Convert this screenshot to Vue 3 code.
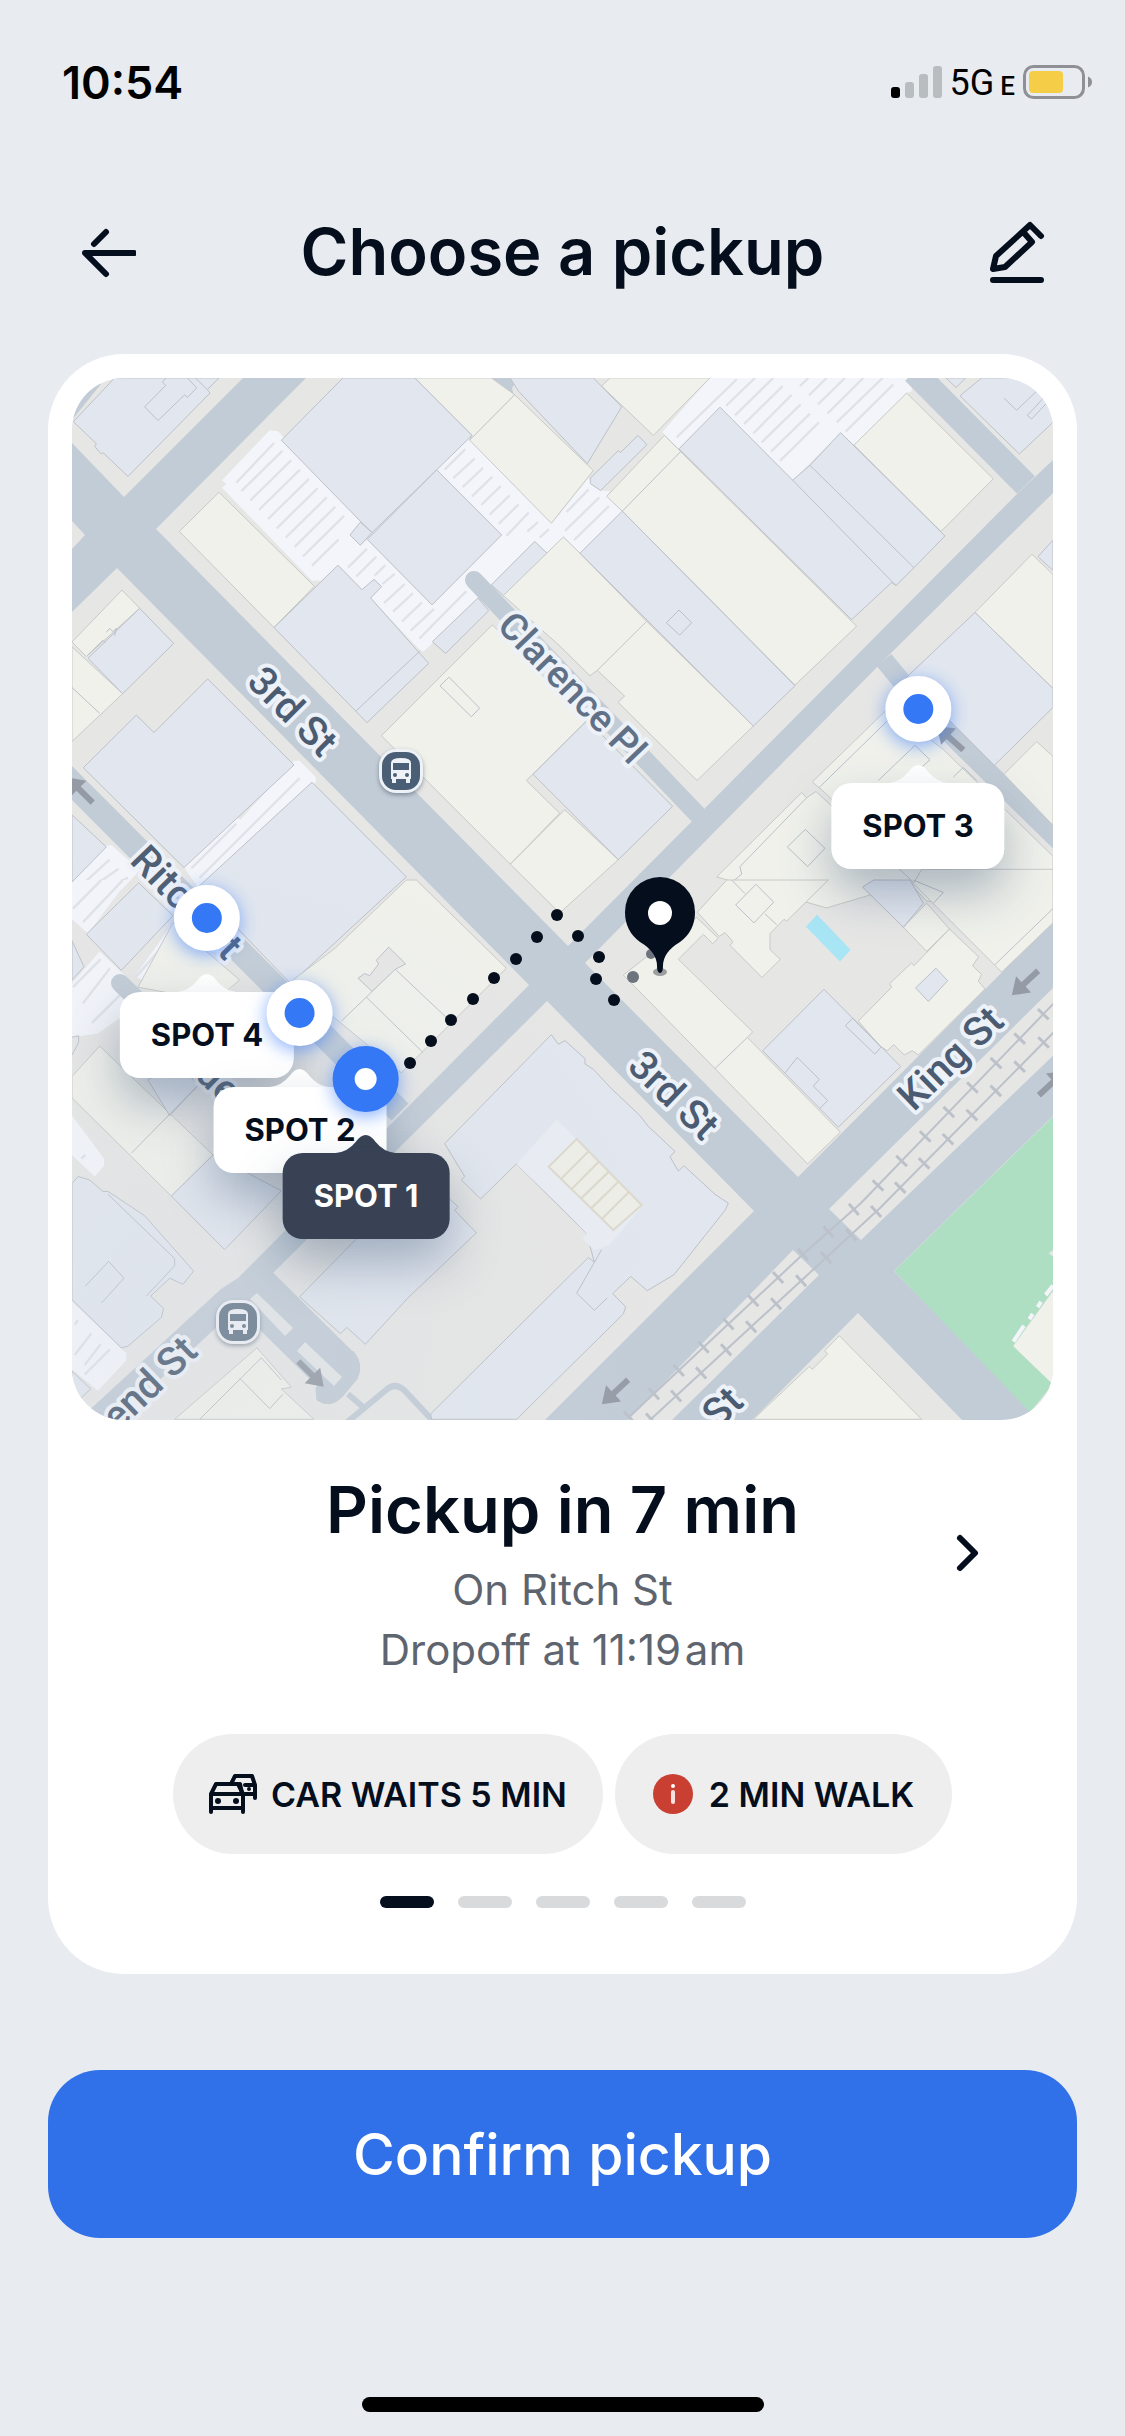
<script setup>
import { ref } from 'vue'

// Visible part of the map, in map units
const view = { x: 72, y: 378, w: 981, h: 1042 }

const spots = [
  { name: 'SPOT 3', x: 918, y: 709 },
  { name: 'SPOT 4', x: 207, y: 918 },
  { name: 'SPOT 2', x: 300, y: 1013 },
  { name: 'SPOT 1', x: 366, y: 1079 },
]
const selected = ref('SPOT 1')

function place(spot) {
  return {
    left: ((spot.x - view.x) / view.w) * 100 + '%',
    top: ((spot.y - view.y) / view.h) * 100 + '%',
  }
}

// Map tiles: each tile has its own grid, placed on the map by its transform
const tiles = [
  {
    id: 'nw',
    transform: 'translate(48 350) scale(0.33333 0.34439)',
    lots: [
      '665,233 690,236 940,500 906,537 937,567 958,550 1152,740 1245,650 1361,537 1166,348 1260,255 1510,503 1560,450 1560,530 1497,590 1460,556 1330,682 1160,845 1125,877 1110,865 968,720 1001,687 978,666 942,696 870,625 820,670 792,670 522,400 535,390 522,378',
      '738,1193 755,1193 803,1240 803,1255 455,1568 408,1503 537,1333 577,1364',
      '175,1440 190,1437 275,1510 220,1568 72,1568 72,1545',
    ],
    stripes:
      'M565 385L678 270M580 410L703 293M607 437L730 320M633 464L756 347M660 491L783 374M686 518L809 401M713 545L836 428M740 572L862 455M765 599L888 482M792 626L872 550M900 632L957 577M925 657L985 600M980 655L1012 625M1003 680L1040 650M1008 735L1070 680M1035 760L1095 706M1062 788L1122 733M1088 815L1158 752M1114 838L1255 700M1190 347L1252 288M1216 372L1280 315M1244 398L1305 342M1272 425L1333 368M1300 450L1358 395M1325 478L1385 422M1352 505L1412 448M1375 540L1442 472M1438 527L1470 500M1475 545L1503 520M430 1505L565 1375M455 1533L755 1243M85 1568L185 1480M120 1568L212 1506M165 1568L240 1532',
    cool: [
      '76,208 200,81 513,81 478,115 486,125 240,367 165,298 160,302 140,280 145,272',
      '700,262 885,81 1100,81 1272,248 1166,348 972,530 940,500',
      '1166,348 1361,537 1152,740 958,550',
      '937,500 972,530 937,567 906,537',
      '870,625 942,696 978,666 1001,687 968,720 1142,910 957,1082 678,806',
      '1460,556 1497,590 1367,714 1330,682',
      '1290,720 1322,757 1193,881 1153,847',
      '275,750 377,852 224,998 120,895',
      '479,955 738,1205 408,1503 106,1213 265,1060 318,1111',
      '792,1255 1075,1530 728,1840 450,1560',
      '72,1350 175,1443 72,1545',
    ],
    warm: [
      '1100,81 1330,81 1400,130 1265,262 1272,248',
      '1400,130 1636,350 1510,503 1265,262',
      '513,413 799,686 678,806 394,527',
      '222,697 275,750 115,890 72,848',
      '72,862 224,998 72,1137',
      '1333,798 1618,1075 1435,1250 1535,1345 1387,1493 1000,1120',
      '1387,1493 1550,1335 1711,1480 1535,1635',
    ],
    lines:
      'M418 81L446 110L418 138L410 130L330 205L290 165L353 103L343 93L355 81M442 81L478 115M1115 875L924 1048M1203 950L1295 1040L1270 1065L1176 975ZM72 980L155 1055M120 885L165 843L172 850M175 820L185 808L195 818L205 808L200 830',
  },
  {
    id: 'ne',
    transform: 'translate(560 350) scale(0.33333 0.34439)',
    lots: [
      '425,108 450,81 1055,81 1055,120 1040,125 882,276 842,240 698,378 480,166 357,287 307,238',
      '0,475 85,372 122,408 150,410 140,425 187,468 60,590 0,530',
    ],
    stripes:
      'M350 254L530 85M498 162L585 81M525 190L640 81M552 215L668 105M580 242L695 130M605 268L722 158M633 295L750 185M660 322L777 210M720 105L745 81M747 132L800 81M774 158L855 81M802 185L910 81M830 210L968 81M857 237L1000 100M15 525L118 428M42 552L147 453M20 470L86 405',
    cool: [
      '-124,120 -150,81 100,81 185,165 82,330',
      '187,468 705,975 580,1092 60,590',
      '480,166 698,378 750,335 842,240 1155,540 1062,632 1008,684 995,675 875,783 357,287',
      '1265,81 1479,81 1479,210 1378,302 1200,133',
      '1158,81 1188,109 1217,81',
      '1245,762 1479,983 1479,1038 1303,1206 1040,950',
      '1434,600 1479,552 1479,640',
      '91,372 175,292 181,298 234,248 261,275 122,408 91,388',
      '-81,1232 82,1075 338,1325 175,1480',
    ],
    warm: [
      '150,81 450,81 280,248 125,105',
      '313,248 890,802 705,973 187,468 140,425',
      '260,788 580,1092 411,1250 174,1023 194,1005 112,930',
      '1040,125 1300,374 1143,527 882,276',
      '1416,593 1479,652 1479,983 1245,762',
      '1430,1137 1479,1180 1479,1380 1332,1232',
      '10,543 60,590 260,788 112,930 90,946 0,860 -170,713',
      '985,1040 757,1254 800,1290 1100,1600 1479,1630 1479,1470 1150,1160',
      '725,1285 740,1300 768,1282 1060,1545 800,1620 470,1530',
    ],
    lines:
      'M362 295L187 468M357 755L395 792L359 828L319 792ZM698 378L1008 684M750 335L1062 632M1332 140L1370 175L1440 110M1402 190L1415 200L1479 135M1402 190L1455 135M778 1270L1000 1060M1065 1148L1110 1190L1040 1250M955 1250L1065 1148M736 1392L795 1447L743 1500L682 1443ZM740 1300L540 1500L545 1522L510 1550M1180 1240L1210 1212L1250 1250',
  },
  {
    id: 'sw',
    transform: 'translate(48 880) scale(0.33333 0.35714)',
    lots: [
      '72,0 240,0 120,150 72,110',
      '155,200 300,330 150,430 72,440 72,290',
      '72,660 168,780 168,800 140,830 72,770',
      '72,1180 235,1325 235,1345 150,1430 72,1370',
      '375,120 575,280 500,350 450,350 260,270',
    ],
    stripes:
      'M75 80L160 0M105 118L225 0M75 300L158 222M105 345L186 247M132 400L240 300M263 272L363 165M80 1330L130 1270M80 1245L90 1232M110 1358L158 1300M110 1385L185 1315M100 780L112 770',
    cool: [
      '272,8 375,100 220,253 115,152',
      '72,170 108,243 72,280',
      '495,770 700,870 530,1035 370,885',
      '90,830 125,840 165,872 180,872 290,940 437,1095 405,1132 365,1115 308,1165 347,1200 340,1225 240,1305 220,1310 72,1175 72,850',
      '1190,880 1230,915 1220,925 1285,988 1080,1170 952,1300 897,1253 877,1270 755,1167 930,1000',
      '72,1375 128,1425 100,1450 72,1425',
      '365,660 450,575 390,510 300,560',
    ],
    warm: [
      '1075,0 1105,0 1375,247 1060,540 728,285 860,192',
      '155,465 495,770 370,885 72,610 72,550',
      '170,930 325,1075 235,1168 210,1160 165,1185 112,1137 72,1100 72,1025 160,932',
      '627,1310 730,1420 700,1425 798,1510 380,1510',
      '375,120 575,280 500,340 270,300',
    ],
    lines:
      'M1042 250L1195 385M955 328L1125 483M955 328L880 395M955 328L1042 248M250 765L450 575M575 1395L665 1480L705 1440M455 1510L640 1338L700 1400M112 1137L182 1068L228 1115L160 1185M180 880L380 1060L380 1080L295 1165M72 440L92 436L92 455L72 490',
  },
  {
    id: 'se',
    transform: 'translate(560 880) scale(0.33333 0.35714)',
    lots: [],
    stripes: '',
    cool: [
      '792,306 1022,522 835,692 608,478',
      '1128,247 1163,282 1105,340 1067,302',
      '940,0 1050,0 1090,65 1030,132 908,20',
      '-26,433 -5,460 15,450 75,500 75,515 100,530 140,570 155,585 195,620 240,660 265,690 345,760 330,775 355,815 372,800 465,880 505,905 495,925 342,1105 262,1150 212,1110 158,1158 197,1195 190,1215 0,1390 -130,1510 -385,1510 -388,1495 0,1135 85,1057 103,1070 80,990 -131,795 -238,893 -296,840 -286,830 -346,738',
    ],
    warm: [
      '412,90 500,0 805,0 680,115 672,110 630,150 630,195 661,222 606,273 510,183 519,173 495,147 478,158',
      '190,266 410,105 475,163 458,178 430,152 355,222 578,425 562,441 841,706 743,795 465,528',
      '1168,137 1256,215 1238,240 1265,265 1255,283 1275,305 1075,490 1057,478 1033,490 1001,461 982,478 960,465 895,395 995,300 989,290 1055,232 1062,240',
      '1060,10 1085,-30 1479,-30 1479,120 1325,258',
      '1100,65 1168,137 1100,200 1030,132',
      '838,1276 1085,1510 580,1510 748,1362 757,1370 803,1327 794,1318',
    ],
    lines:
      'M465 528L562 441M588 12L641 62L582 120L527 70ZM615 95L650 125M712 497L778 558L760 577L803 617L780 640M712 497L675 540M878 387L963 468L945 488L856 408ZM1305 237L1479 80M1060 0L1150 35L1120 65M125 1035L50 1157L103 1205L142 1170M515 0L555 38',
  },
]

const roads = [
  // 3rd St with the north-west crossing
  '72,443 124,497 243,378 306,378 156,529 568,946 585,963 798,1177 894,1271 1040,1420 962,1420 858,1313 754,1211 547,1001 529,985 117,568 72,612 72,549 85,535 72,521',
  // Townsend St
  '1053,460 1035,477 1017,494 568,946 529,985 238,1278 221,1289 72,1426 110,1426 248,1298 268,1278 547,1001 585,963 890,654 1053,493',
  // King St
  '1053,921 798,1177 754,1211 545,1420 752,1420 858,1313 894,1271 1053,1116',
  '72,420 101,384 96,378 72,378',
  '491,378 518,378 512,388 514,396 506,396',
]

const route = [
  [410, 1063], [431, 1041], [451, 1020], [473, 999], [494, 978], [516, 959],
  [537, 937], [557, 915], [578, 936], [599, 957], [596, 979], [614, 1000],
]

const arrows = [
  [80, 790, 45], [1025, 983, -43], [615, 1392, -43],
  [1052, 1083, 137], [311, 1374, 225], [950, 738, 42],
]

const streets = [
  { text: '3rd St', x: 293, y: 711, r: 45 },
  { text: '3rd St', x: 674, y: 1095, r: 44 },
  { text: 'Clarence Pl', x: 573, y: 687, r: 46, soft: true },
  { text: 'Ritch St', x: 187, y: 902, r: 46 },
  { text: 'Clyde', x: 199, y: 1062, r: 44 },
  { text: 'King St', x: 950, y: 1058, r: -44 },
  { text: 'St', x: 722, y: 1407, r: -44 },
  { text: 'end St', x: 149, y: 1383, r: -44 },
]

const buses = [
  { x: 401, y: 771 },
  { x: 238, y: 1322, faded: true },
]

const pages = 5
const page = ref(1)
</script>

<template>
  <div class="screen">
    <div class="status">
      <span class="time">10:54</span>
      <div class="signals">
        <svg class="bars" viewBox="0 0 51 32" aria-hidden="true">
          <rect x="0" y="21" width="9" height="11" rx="3" fill="#000" />
          <rect x="14" y="16" width="9" height="16" rx="3" fill="#b8bdc0" />
          <rect x="28" y="8" width="9" height="24" rx="3" fill="#b8bdc0" />
          <rect x="42" y="0" width="9" height="32" rx="3" fill="#b8bdc0" />
        </svg>
        <span class="network">5G<small>E</small></span>
        <svg class="battery" viewBox="0 0 70 34" aria-hidden="true">
          <rect x="1.5" y="1.5" width="59" height="31" rx="9" fill="none" stroke="#8e9095" stroke-width="3" />
          <rect x="6" y="6" width="34" height="22" rx="4" fill="#f6cd46" />
          <path d="M65 11.500Q69 13 69 17T65 22.500Z" fill="#8e9095" />
        </svg>
      </div>
    </div>

    <header class="header">
      <button class="icon-button" type="button" aria-label="Back">
        <svg viewBox="0 0 60 66">
          <path d="M58 34H9L30 55M18 25L30 13" fill="none" stroke="#050e1c" stroke-width="6" stroke-linecap="round" stroke-linejoin="round" />
        </svg>
      </button>
      <h1>Choose a pickup</h1>
      <button class="icon-button" type="button" aria-label="Edit pickup">
        <svg viewBox="0 0 60 66" fill="none" stroke="#050e1c" stroke-width="6" stroke-linecap="round" stroke-linejoin="round">
          <path d="M52 17L41 6L7 37L4 50L16 48L43 23L36 15" />
          <path d="M4 61H52" />
        </svg>
      </button>
    </header>

    <main class="card">
      <div class="map">
        <svg class="canvas" viewBox="72 378 981 1042" role="img" aria-label="Map of pickup spots">
          <defs>
            <radialGradient id="haze" gradientUnits="userSpaceOnUse" cx="200" cy="1330" r="520">
              <stop offset="0" stop-color="#d3dae3" stop-opacity="0.25" />
              <stop offset="1" stop-color="#d3dae3" stop-opacity="0" />
            </radialGradient>
          </defs>
          <rect x="72" y="378" width="981" height="1042" fill="#e6e6e5" />

          <g v-for="t in tiles" :key="t.id" :transform="t.transform">
            <polygon v-for="p in t.lots" :key="p" :points="p" class="lot" />
            <path :d="t.stripes" class="stripes" />
          </g>

          <g class="roads">
            <polygon v-for="p in roads" :key="p" :points="p" />
            <path d="M60 771L400 1112" stroke-width="24" />
            <path d="M914 372L1026 485" stroke-width="25" />
            <path d="M884 660L912 694L960 744L1060 842" stroke-width="19" />
            <path d="M120 983L240 1100" stroke-width="18" stroke-linecap="round" />
            <path d="M474 580L697 814" stroke-width="18" stroke-linecap="round" />
            <path d="M250 1285L335 1369" stroke-width="50" />
            <path d="M318 1386L352 1352L356 1357Q364 1368 354 1380L342 1396Q330 1408 318 1398Z" />
            <path class="filled" d="M316 1388L353 1351Q364 1364 357 1379L342 1397Q330 1409 317 1400Z" />
            <path d="M348 1394L363 1407M345 1424L386 1390Q395 1382 404 1390L436 1424" stroke-width="6" />
          </g>
          <path d="M257 1293L293 1328L285 1336L250 1299ZM305 1342L342 1377L334 1386L297 1351Z" fill="#e4e6e7" />
          <path d="M829 1209L1060 981V1049L861 1240ZM793 1250L819 1275L672 1420H628Z" fill="#e6e6e5" />

          <g v-for="t in tiles" :key="t.id + '-blocks'" :transform="t.transform">
            <polygon v-for="p in t.warm" :key="p" :points="p" class="block warm" />
            <polygon v-for="p in t.cool" :key="p" :points="p" class="block cool" />
            <path :d="t.lines" class="lines" />
          </g>

          <g transform="translate(48 880) scale(0.33333 0.35714)">
            <path d="M1022 188L1073 235L1042 250L972 312L930 275L950 262L965 268L992 235L985 225Z" class="block" fill="#e6e6e5" />
          </g>
          <g transform="translate(560 880) scale(0.33333 0.35714)">
            <path d="M-9 670L-131 795L0 912L80 990L68 1005L103 1037L150 1020L250 910L0 680Z" fill="#e9edf3" />
            <path d="M-34 803L50 725L245 910L160 980ZM5 835L85 760M35 865L115 790M65 890L145 818M95 918L175 845M128 947L205 875" class="stand" />
            <polygon points="771,97 872,195 840,228 738,131" fill="#a8e5f5" />
            <polygon points="1003,1095 1490,652 1490,1030 1465,1045 1490,1062 1490,1135 1360,1305 1479,1412 1410,1490" fill="#aedfc2" />
            <polygon points="1360,1305 1490,1140 1490,1422" fill="#f0f1eb" />
            <path d="M1360 1292L1392 1248M1408 1230L1418 1215M1433 1196L1443 1181M1457 1162L1479 1136" stroke="#f3f5fa" stroke-width="12" />
          </g>

          <g class="rails">
            <path d="M628 1418L800 1257L861 1203L1056 1001M650 1420L880 1208L1056 1030" />
            <path class="ties" d="M628 1418L800 1257L861 1203L1056 1001M650 1420L880 1208L1056 1030" />
          </g>

          <path
            v-for="a in arrows"
            :key="a.join()"
            :transform="`translate(${a[0]} ${a[1]}) rotate(${a[2]})`"
            d="M-18 0L-2 -11V-3H18V3H-2V11Z"
            fill="#949ba5"
          />

          <text
            v-for="s in streets"
            :key="s.text + s.x"
            class="street"
            :class="{ soft: s.soft }"
            :transform="`translate(${s.x} ${s.y}) rotate(${s.r})`"
            dy="14"
          >{{ s.text }}</text>

          <g v-for="b in buses" :key="b.x" :transform="`translate(${b.x} ${b.y})`" class="bus">
            <rect x="-22" y="-22" width="44" height="44" rx="17" fill="#eef1f6" />
            <rect x="-19" y="-19" width="38" height="38" rx="14" :fill="b.faded ? '#647789' : '#4a5f75'" />
            <path d="M-10 -8Q-10 -13 0 -13T10 -8V8H9V12H5V8H-5V12H-9V8H-10Z" fill="#eef1f6" />
            <path d="M-8 -8H8V-1H-8Z" :fill="b.faded ? '#647789' : '#4a5f75'" />
            <circle cx="-6" cy="4" r="2" :fill="b.faded ? '#647789' : '#4a5f75'" />
            <circle cx="6" cy="4" r="2" :fill="b.faded ? '#647789' : '#4a5f75'" />
          </g>

          <rect x="72" y="378" width="981" height="1042" fill="url(#haze)" />

          <circle cx="633" cy="977" r="6" fill="#6d747d" />
          <circle cx="651" cy="954" r="5" fill="#6d747d" />
          <circle v-for="d in route" :key="d.join()" :cx="d[0]" :cy="d[1]" r="6" fill="#050e1c" />
          <ellipse cx="660" cy="972" rx="7" ry="4" fill="#9c9fa0" />
          <path d="M660 973Q657 973 657 966Q657 952 640 942Q625 931 625 912A35 35 0 0 1 695 912Q695 931 680 942Q663 952 663 966Q663 973 660 973Z" fill="#050e1c" />
          <circle cx="660" cy="913" r="12" fill="#fff" />
        </svg>

        <button
          v-for="s in spots"
          :key="s.name"
          type="button"
          class="spot"
          :class="{ active: s.name === selected }"
          :style="place(s)"
          @click="selected = s.name"
        >
          <span class="dot"></span>
          <svg class="tip" viewBox="0 0 60 19" aria-hidden="true">
            <path d="M0 19Q12 18 20 8Q30 -6 40 8Q48 18 60 19Z" fill="currentColor" />
          </svg>
          <span class="tag">{{ s.name }}</span>
        </button>
      </div>

      <section class="summary">
        <div class="details">
          <h2>Pickup in 7 min</h2>
          <p>On Ritch St</p>
          <p>Dropoff at 11:19&#8202;am</p>
        </div>
        <button class="next" type="button" aria-label="Next option">
          <svg viewBox="0 0 30 42">
            <path d="M6 6L21 21L6 36" fill="none" stroke="#050e1c" stroke-width="6" stroke-linecap="round" stroke-linejoin="round" />
          </svg>
        </button>
      </section>

      <div class="chips">
        <div class="chip">
          <svg class="cars" viewBox="0 0 48 40" fill="none" stroke="#050e1c" stroke-width="4" stroke-linecap="round" stroke-linejoin="round">
            <path d="M23 8L26 2H43L46 11V24M36 20H46M36 11H46" />
            <path d="M2 38V20L7 10H29L34 20V38M2 20H34M2 34H34" />
            <path d="M31 10L33 19" />
            <circle cx="9" cy="27" r="3" fill="#050e1c" stroke="none" />
            <circle cx="27" cy="27" r="3" fill="#050e1c" stroke="none" />
            <circle cx="40" cy="15" r="2" fill="#050e1c" stroke="none" />
          </svg>
          <span>CAR WAITS 5 MIN</span>
        </div>
        <div class="chip walk">
          <svg class="info" viewBox="0 0 40 40" aria-hidden="true">
            <circle cx="20" cy="20" r="20" fill="#c93f31" />
            <circle cx="20" cy="12" r="2" fill="#fff" />
            <path d="M20 18V28" stroke="#f6e3e1" stroke-width="4" stroke-linecap="round" />
          </svg>
          <span>2 MIN WALK</span>
        </div>
      </div>

      <div class="pager" aria-hidden="true">
        <i v-for="n in pages" :key="n" :class="{ on: n === page }"></i>
      </div>
    </main>

    <button class="confirm" type="button">Confirm pickup</button>
    <div class="home"></div>
  </div>
</template>

<style>
html,
body {
  background: #e8ebf0;
}
</style>

<style scoped>
.screen {
  display: flex;
  flex-direction: column;
  min-height: 100vh;
  box-sizing: border-box;
  padding: 0 48px 24px;
  background: #e8ebf0;
  color: #050e1c;
  font-family: Inter, "Liberation Sans", sans-serif;
}

button {
  padding: 0;
  border: 0;
  background: none;
  color: inherit;
  font: inherit;
  cursor: pointer;
}

h1,
h2,
p {
  margin: 0;
}

.status {
  display: flex;
  align-items: center;
  justify-content: space-between;
  height: 164px;
  padding: 0 0 0 14px;
  margin-right: -16px;
  color: #000;
}

.time {
  font-size: 45px;
  font-weight: 600;
}

.signals {
  display: flex;
  align-items: center;
}

.bars {
  width: 51px;
  height: 32px;
  margin-right: 8px;
}

.network {
  padding-top: 4px;
  font: 400 36px/36px Roboto, sans-serif;
}

.network small {
  margin-left: 6px;
  font-size: 26px;
  font-weight: 500;
}

.battery {
  width: 70px;
  height: 34px;
  margin-left: 8px;
}

.header {
  display: flex;
  align-items: center;
  justify-content: space-between;
  height: 176px;
  padding: 0 28px;
  margin-bottom: 14px;
}

.icon-button svg {
  display: block;
  width: 60px;
  height: 66px;
}

h1,
h2 {
  font-size: 65px;
  line-height: 84px;
  font-weight: 600;
}

.card {
  padding: 24px 24px 66px;
  border-radius: 76px;
  background: #fff;
}

.map {
  position: relative;
  aspect-ratio: 981 / 1042;
  overflow: hidden;
  border-radius: 52px;
}

.canvas {
  display: block;
  width: 100%;
  height: 100%;
}

.lot {
  fill: #f3f5fa;
}

.stripes {
  fill: none;
  stroke: #dfe3e8;
  stroke-width: 7;
}

.roads {
  fill: #c2ccd6;
}

.roads path {
  fill: none;
  stroke: #c2ccd6;
}

.roads .filled {
  fill: #c2ccd6;
}

.block,
.lines {
  stroke: #bcc0c8;
  stroke-width: 1;
  vector-effect: non-scaling-stroke;
}

.cool {
  fill: #e2e7ef;
}

.warm {
  fill: #f0f1eb;
  stroke: #c8cac8;
}

.lines {
  fill: none;
}

.stand {
  fill: #eeeee8;
  stroke: #dcd9cc;
  stroke-width: 6;
}

.rails path {
  fill: none;
  stroke: #bcc1ca;
  stroke-width: 2;
}

.rails .ties {
  stroke-width: 15;
  stroke-dasharray: 3 31;
}

.street {
  fill: #4b5c72;
  stroke: #edf1f8;
  stroke-width: 8;
  stroke-linejoin: round;
  paint-order: stroke;
  font: 500 40px Roboto, sans-serif;
  text-anchor: middle;
}

.street.soft {
  fill: #5f7087;
  font-size: 38px;
}

.bus {
  filter: drop-shadow(0 2px 2px rgba(60, 75, 95, 0.5));
}

.spot {
  position: absolute;
  display: flex;
  flex-direction: column;
  align-items: center;
  color: #fff;
  transform: translate(-50%, -33px);
}

.dot {
  box-sizing: border-box;
  width: 66px;
  height: 66px;
  margin-bottom: 22px;
  border: 18px solid #fff;
  border-radius: 50%;
  background: #3478f6;
  box-shadow: 0 4px 18px rgba(52, 120, 246, 0.6);
}

.tip {
  display: block;
  width: 60px;
  height: 19px;
}

.tag {
  padding: 0 31px;
  border-radius: 20px;
  background: #fff;
  box-shadow: 0 24px 48px rgba(50, 75, 110, 0.35);
  color: #050e1c;
  font-size: 31px;
  line-height: 86px;
  font-weight: 700;
  white-space: nowrap;
}

.active {
  color: #384254;
}

.active .dot {
  border-width: 22px;
  border-color: #3478f6;
  background: #fff;
}

.active .tag {
  background: #384254;
  color: #fff;
}

.summary {
  display: grid;
  grid-template-columns: 168px 1fr 168px;
  align-items: start;
  padding-top: 48px;
}

.details {
  grid-column: 2;
  color: #5f656f;
  font-size: 42px;
  line-height: 60px;
  text-align: center;
}

h2 {
  margin-bottom: 8px;
  color: #050e1c;
}

.next {
  justify-self: center;
  margin-top: 64px;
}

.next svg {
  display: block;
  width: 30px;
  height: 42px;
}

.chips {
  display: flex;
  justify-content: center;
  gap: 12px;
  margin-top: 54px;
}

.chip {
  display: flex;
  align-items: center;
  gap: 14px;
  height: 120px;
  padding: 0 36px;
  border-radius: 60px;
  background: #eee;
  font-size: 34px;
  font-weight: 600;
  white-space: nowrap;
}

.walk {
  gap: 16px;
  padding: 0 38px;
}

.cars {
  width: 48px;
  height: 40px;
}

.info {
  width: 40px;
  height: 40px;
}

.pager {
  display: flex;
  justify-content: center;
  gap: 24px;
  margin-top: 42px;
}

.pager i {
  width: 54px;
  height: 12px;
  border-radius: 6px;
  background: #d9dadc;
}

.pager .on {
  background: #050e1c;
}

.confirm {
  height: 168px;
  margin-top: 96px;
  border-radius: 52px;
  background: #3070e8;
  color: #fff;
  font-size: 57px;
  font-weight: 500;
}

.home {
  align-self: center;
  width: 402px;
  height: 15px;
  margin-top: auto;
  border-radius: 8px;
  background: #000;
}
</style>
